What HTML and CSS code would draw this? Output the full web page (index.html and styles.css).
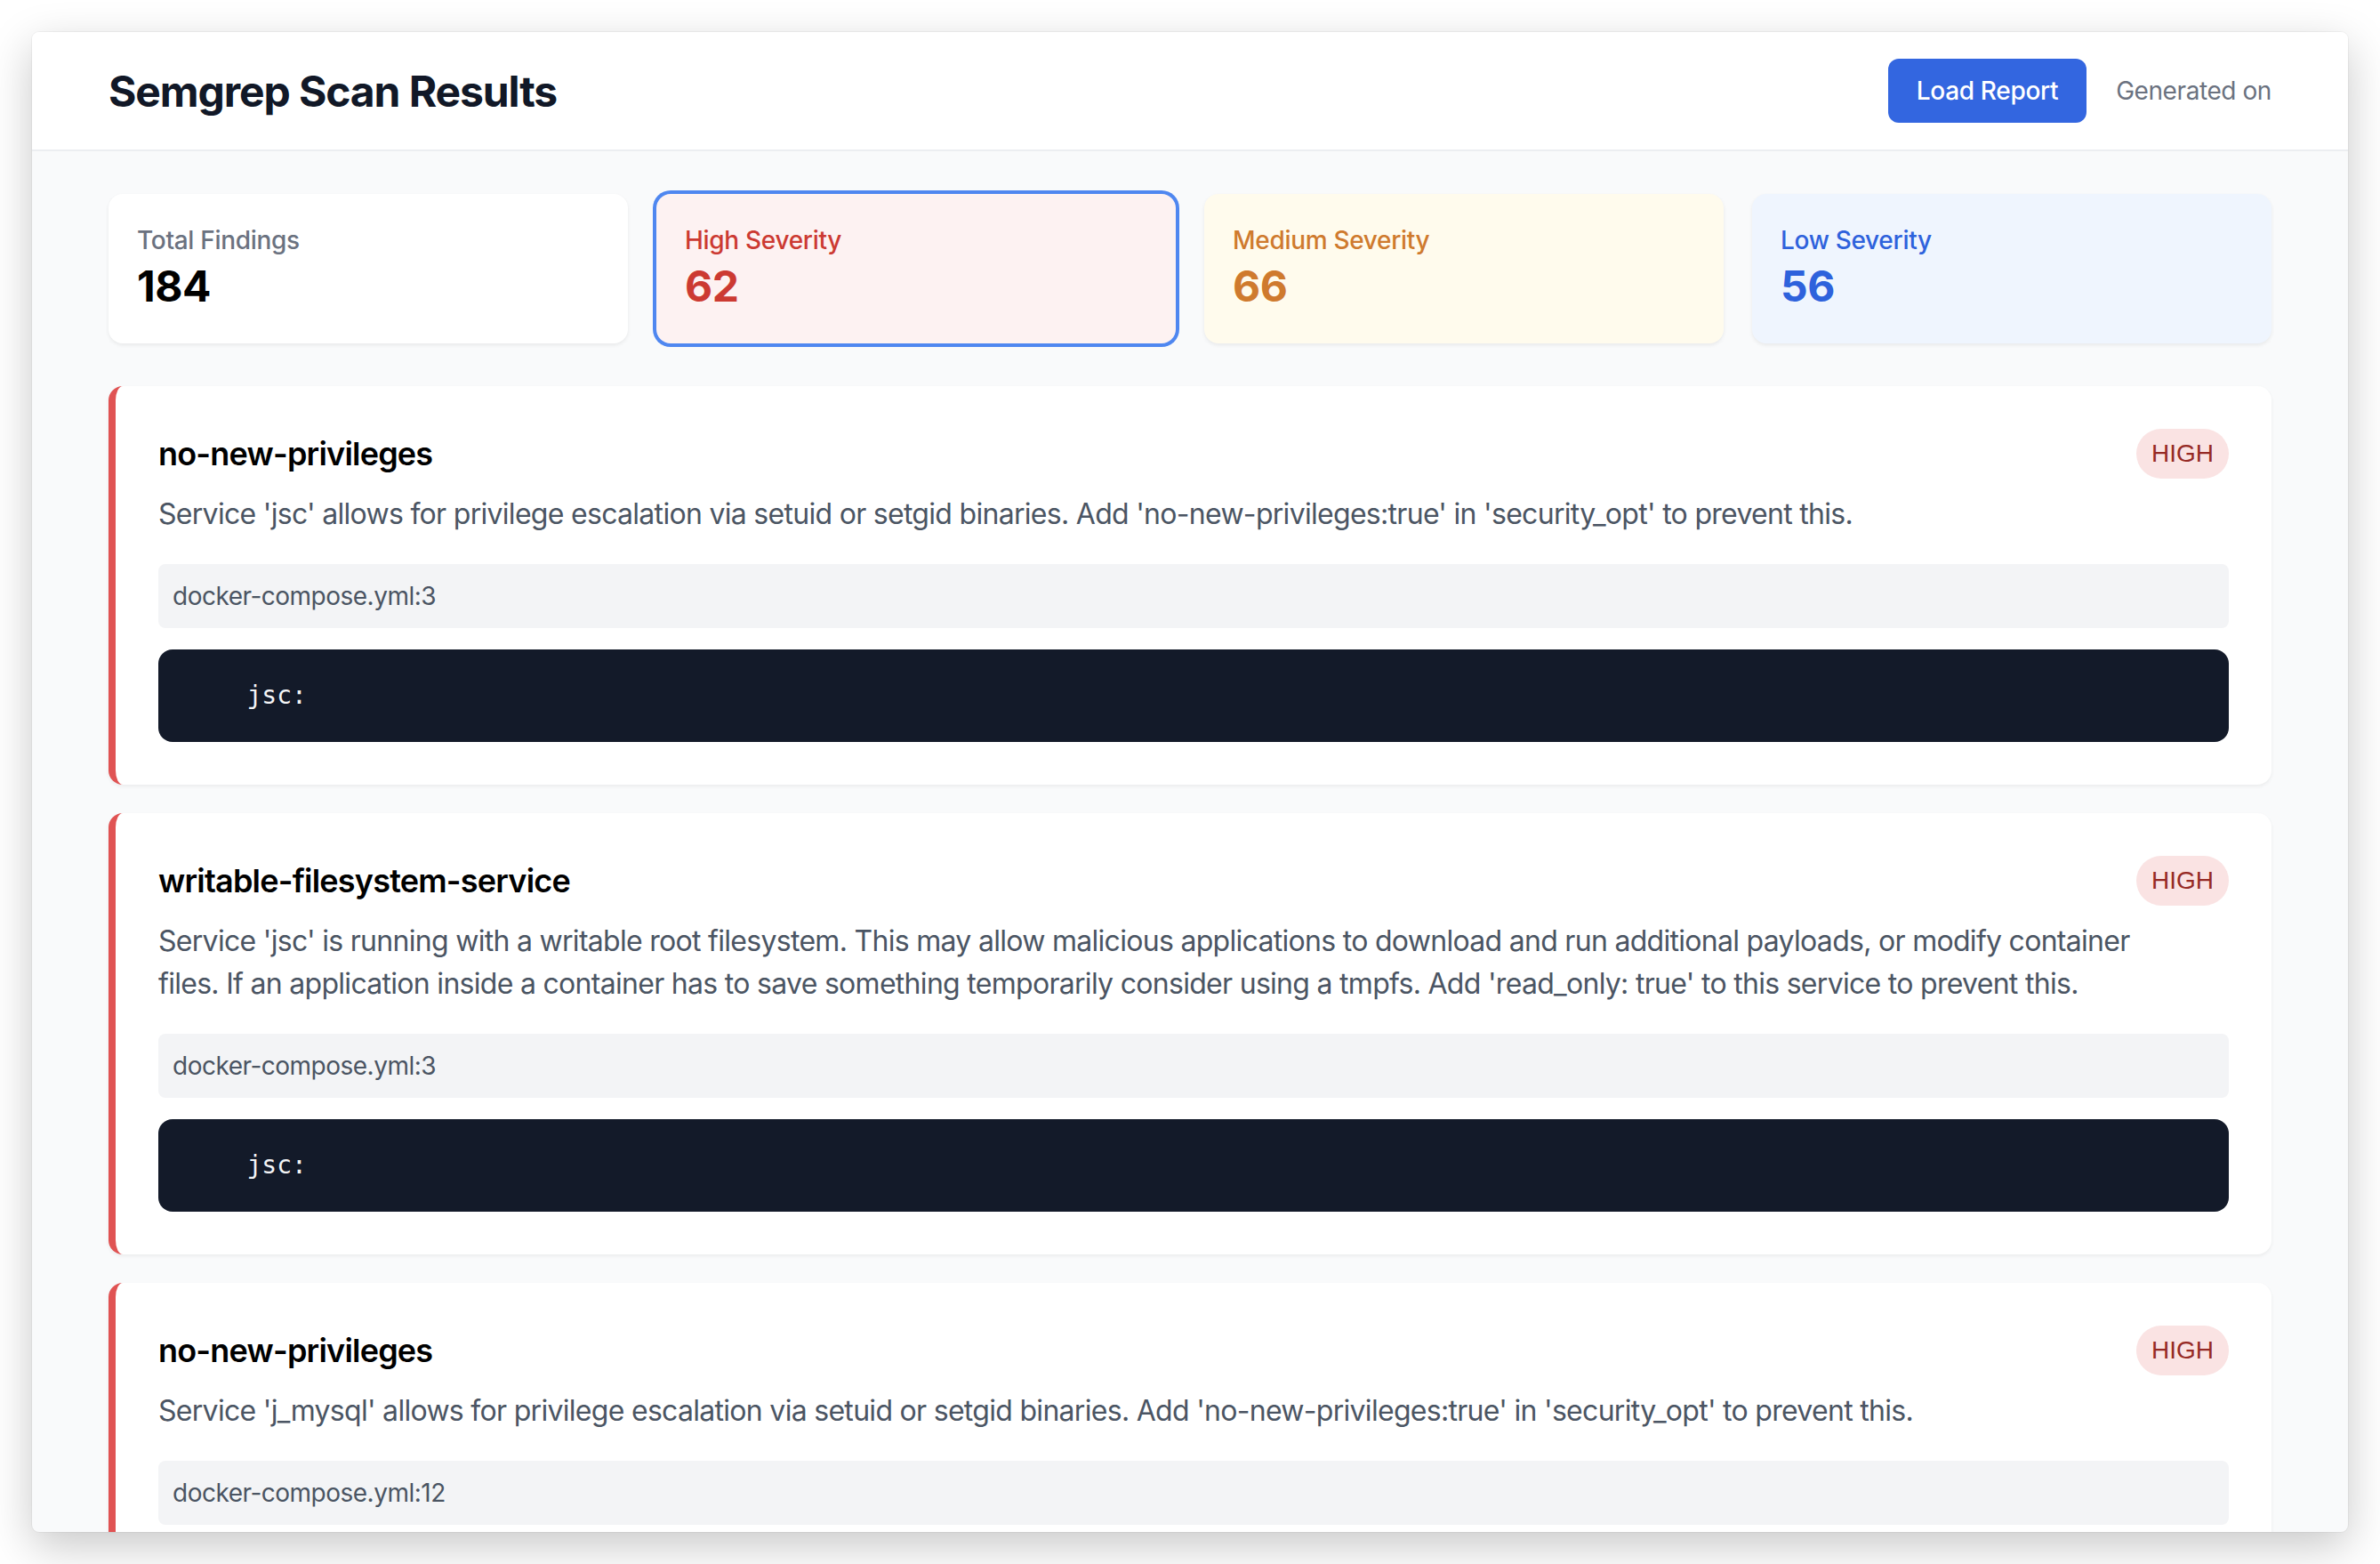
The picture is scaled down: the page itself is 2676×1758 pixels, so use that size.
FILE: index.html
```html
<!DOCTYPE html>
<html lang="en">
<head>
<meta charset="utf-8">
<title>Semgrep Scan Results</title>
<link rel="stylesheet" href="styles.css">
</head>
<body>
<div class="window">
  <header class="topbar">
    <div class="container topbar-inner">
      <h1 class="title">Semgrep Scan Results</h1>
      <div class="actions">
        <button class="btn">Load Report</button>
        <span class="generated">Generated on</span>
      </div>
    </div>
  </header>
  <main class="container main">
    <section class="stats">
      <div class="stat stat-total">
        <div class="stat-label">Total Findings</div>
        <div class="stat-value">184</div>
      </div>
      <div class="stat stat-high">
        <div class="stat-label">High Severity</div>
        <div class="stat-value">62</div>
      </div>
      <div class="stat stat-medium">
        <div class="stat-label">Medium Severity</div>
        <div class="stat-value">66</div>
      </div>
      <div class="stat stat-low">
        <div class="stat-label">Low Severity</div>
        <div class="stat-value">56</div>
      </div>
    </section>

    <section class="findings">
      <article class="finding">
        <div class="finding-head">
          <div class="finding-text">
            <h3 class="finding-title">no-new-privileges</h3>
            <p class="finding-desc">Service 'jsc' allows for privilege escalation via setuid or setgid binaries. Add 'no-new-privileges:true' in 'security_opt' to prevent this.</p>
          </div>
          <span class="badge">HIGH</span>
        </div>
        <div class="location">docker-compose.yml:3</div>
        <pre class="code">    jsc:</pre>
      </article>

      <article class="finding">
        <div class="finding-head">
          <div class="finding-text">
            <h3 class="finding-title">writable-filesystem-service</h3>
            <p class="finding-desc">Service 'jsc' is running with a writable root filesystem. This may allow malicious applications to download and run additional payloads, or modify container files. If an application inside a container has to save something temporarily consider using a tmpfs. Add 'read_only: true' to this service to prevent this.</p>
          </div>
          <span class="badge">HIGH</span>
        </div>
        <div class="location">docker-compose.yml:3</div>
        <pre class="code">    jsc:</pre>
      </article>

      <article class="finding">
        <div class="finding-head">
          <div class="finding-text">
            <h3 class="finding-title">no-new-privileges</h3>
            <p class="finding-desc">Service 'j_mysql' allows for privilege escalation via setuid or setgid binaries. Add 'no-new-privileges:true' in 'security_opt' to prevent this.</p>
          </div>
          <span class="badge">HIGH</span>
        </div>
        <div class="location">docker-compose.yml:12</div>
      </article>
    </section>
  </main>
</div>
</body>
</html>
```

FILE: styles.css
```css
* { box-sizing: border-box; }

html, body {
  margin: 0;
  padding: 0;
  background: #ffffff;
  width: 2676px;
  height: 1758px;
  overflow: hidden;
}

body {
  font-family: Inter, "Noto Sans", "Liberation Sans", sans-serif;
  padding: 36px;
}

.window {
  width: 2604px;
  height: 1686px;
  background: #f9fafb;
  border-radius: 8px;
  overflow: hidden;
  box-shadow: 0 16px 50px rgba(0, 0, 0, 0.22), 0 0 0 1px rgba(0, 0, 0, 0.04);
}

.container {
  max-width: 2560px;
  margin: 0 auto;
  padding: 0 64px;
}

.topbar {
  background: #ffffff;
  border-bottom: 2px solid #eceef1;
  padding: 30px 0;
}

.topbar-inner {
  display: flex;
  justify-content: space-between;
  align-items: center;
}

.title {
  margin: 0;
  font-size: 48px;
  line-height: 64px;
  font-weight: 700;
  letter-spacing: -0.023em;
  color: #111827;
  padding-top: 2px;
}

.actions {
  display: flex;
  align-items: center;
  gap: 33px;
}

.btn {
  font-family: inherit;
  font-size: 28px;
  line-height: 40px;
  font-weight: 500;
  letter-spacing: -0.012em;
  color: #ffffff;
  background: #3366e0;
  border: none;
  border-radius: 12px;
  padding: 16px 32px;
  height: 72px;
}

.generated {
  font-size: 28px;
  line-height: 40px;
  letter-spacing: -0.015em;
  color: #6b7280;
}

.main {
  padding-top: 48px;
}

.stats {
  display: grid;
  grid-template-columns: repeat(4, 1fr);
  gap: 32px;
  margin-bottom: 48px;
}

.stat {
  border-radius: 16px;
  padding: 32px;
  box-shadow: 0 2px 4px rgba(0, 0, 0, 0.07);
}

.stat-label {
  font-size: 28px;
  line-height: 40px;
  font-weight: 500;
  letter-spacing: -0.011em;
}

.stat-value {
  font-size: 48px;
  line-height: 64px;
  font-weight: 700;
  letter-spacing: -0.01em;
}

.stat-total { background: #ffffff; }
.stat-total .stat-label { color: #6b7280; }
.stat-total .stat-value { color: #000000; }

.stat-high {
  background: #fdf2f2;
  box-shadow: 0 0 0 4px #4f87f0, 0 2px 4px rgba(0, 0, 0, 0.07);
}
.stat-high .stat-label,
.stat-high .stat-value { color: #cc3a32; }

.stat-medium { background: #fffbed; }
.stat-medium .stat-label,
.stat-medium .stat-value { color: #cf7a2e; }

.stat-low { background: #eff5fe; }
.stat-low .stat-label,
.stat-low .stat-value { color: #2e62dc; }

.findings {
  display: flex;
  flex-direction: column;
  gap: 32px;
}

.finding {
  background: #ffffff;
  border-left: 8px solid #e05353;
  border-radius: 16px;
  padding: 48px;
  box-shadow: 0 2px 4px rgba(0, 0, 0, 0.06);
}

.finding-head {
  display: flex;
  justify-content: space-between;
  align-items: flex-start;
}

.finding-text {
  flex: 1;
  min-width: 0;
}

.finding-title {
  margin: 0 0 16px;
  font-size: 36px;
  line-height: 56px;
  font-weight: 600;
  letter-spacing: -0.022em;
  color: #000000;
}

.finding-desc {
  margin: 0 0 32px;
  font-size: 32px;
  line-height: 48px;
  letter-spacing: -0.022em;
  color: #4b5563;
}

.badge {
  flex-shrink: 0;
  font-family: "Liberation Sans", Arial, sans-serif;
  font-size: 28px;
  line-height: 40px;
  padding: 8px 17px;
  border-radius: 9999px;
  background: #fae3e3;
  color: #962a25;
}

.location {
  background: #f3f4f6;
  border-radius: 8px;
  padding: 16px;
  font-size: 28px;
  line-height: 40px;
  letter-spacing: -0.018em;
  color: #4b5563;
  margin-bottom: 24px;
}

.code {
  margin: 0;
  background: #131a29;
  color: #f3f4f6;
  border-radius: 16px;
  padding: 32px;
  font-family: "DejaVu Sans Mono", "Liberation Mono", monospace;
  font-size: 28px;
  line-height: 40px;
  white-space: pre;
}
```
